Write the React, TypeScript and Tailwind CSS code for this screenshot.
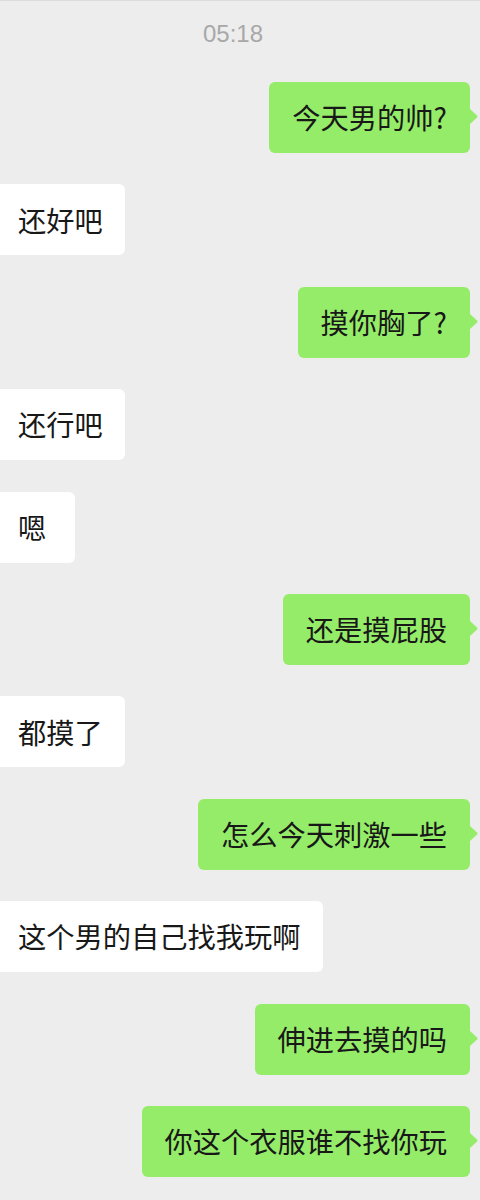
import React from 'react';

type Msg = { me: boolean; text: string };

const messages: Msg[] = [
  { me: true, text: '今天男的帅?' },
  { me: false, text: '还好吧' },
  { me: true, text: '摸你胸了?' },
  { me: false, text: '还行吧' },
  { me: false, text: '嗯' },
  { me: true, text: '还是摸屁股' },
  { me: false, text: '都摸了' },
  { me: true, text: '怎么今天刺激一些' },
  { me: false, text: '这个男的自己找我玩啊' },
  { me: true, text: '伸进去摸的吗' },
  { me: true, text: '你这个衣服谁不找你玩' },
];

const Bubble: React.FC<{ msg: Msg }> = ({ msg }) => {
  if (msg.me) {
    return (
      <div className="flex justify-end pr-[10px]">
        <div className="relative h-[71px] flex items-center px-[23px] rounded-[6px] bg-[#95ec69] text-[28.25px] text-[#181818]">
          {msg.text}
          <svg className="absolute -right-[8px] top-[26px]" width="9" height="17" viewBox="0 0 9 17">
            <path d="M0 0 L8 7.5 Q9 8.5 8 9.5 L0 17 Z" fill="#95ec69" />
          </svg>
        </div>
      </div>
    );
  }
  return (
    <div className="flex justify-start">
      <div className="h-[71px] min-w-[75px] flex items-center pl-[18px] pr-[22px] rounded-r-[6px] bg-white text-[28.25px] text-[#181818]">
        {msg.text}
      </div>
    </div>
  );
};

const App: React.FC = () => {
  return (
    <div
      className="w-[480px] h-[1200px] overflow-hidden bg-[#ededed] border-t border-[#dcdcdc]"
      style={{ fontFamily: '"Noto Sans CJK SC", "Noto Sans", sans-serif' }}
    >
      <div className="flex justify-center pr-[14px] pt-[18px] h-[81px]">
        <span className="text-[24px] leading-[30px] text-[#a8a8a8] font-['Liberation_Sans',sans-serif]">05:18</span>
      </div>
      <div className="flex flex-col gap-[31.4px]">
        {messages.map((m, i) => (
          <Bubble key={i} msg={m} />
        ))}
      </div>
    </div>
  );
};

export default App;
